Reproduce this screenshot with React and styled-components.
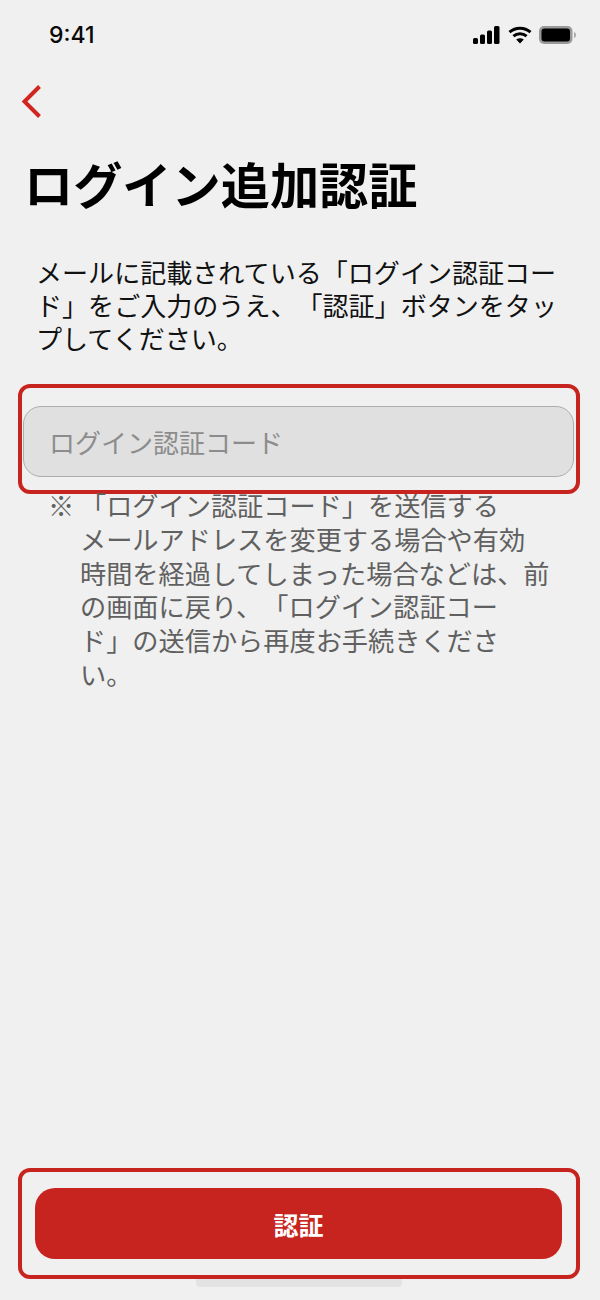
import React from "react";
import styled, { createGlobalStyle } from "styled-components";

const Global = createGlobalStyle`
  html, body { margin: 0; padding: 0; background: #f0f0f0; }
  * { box-sizing: border-box; }
`;

const JP = `"Noto Sans CJK JP", "Noto Sans", sans-serif`;
const RED = "#c8241f";

const Page = styled.div`
  position: relative;
  width: 600px;
  height: 1300px;
  display: flex;
  flex-direction: column;
  background: #f0f0f0;
  font-family: ${JP};
  text-spacing-trim: space-all;
  overflow: hidden;
`;

const StatusBar = styled.div`
  height: 36px;
  margin-top: 17px;
  padding: 0 24px 0 49px;
  display: flex;
  align-items: center;
  justify-content: space-between;
`;

const Time = styled.span`
  font-family: Inter, "Liberation Sans", sans-serif;
  font-weight: 500;
  font-size: 23px;
  color: #0a0a0a;
`;

const StatusIcons = styled.div`
  display: flex;
  align-items: center;
  gap: 7.5px;
`;

const BackButton = styled.button`
  align-self: flex-start;
  margin: 30px 0 0 19px;
  padding: 0;
  border: 0;
  background: none;
  display: flex;
  width: 28px;
  height: 36px;
`;

const Title = styled.h1`
  margin: 29px 0 0 24px;
  font-size: 49.2px;
  line-height: 70px;
  font-weight: 700;
  color: #000;
  white-space: nowrap;
`;

const Lead = styled.p`
  margin: 38px 0 0 36px;
  font-size: 26.05px;
  line-height: 33px;
  font-weight: 400;
  color: #111;
  white-space: nowrap;
`;

const Highlight = styled.div`
  margin: ${(p) => p.$margin};
  height: ${(p) => p.$height}px;
  width: 562px;
  border: 4px solid ${RED};
  border-radius: 12px;
  display: flex;
  align-items: center;
  justify-content: center;
`;

const InputField = styled.input`
  width: 551px;
  height: 71px;
  margin-top: 4px;
  padding: 0 25px;
  border: 1.5px solid #adadad;
  border-radius: 18px;
  background: #e0e0e0;
  font-family: ${JP};
  font-size: 26px;
  outline: none;
  &::placeholder { color: #8c8c8c; opacity: 1; }
`;

const Note = styled.p`
  margin: -5px 0 0 0;
  padding-left: 80px;
  position: relative;
  font-size: 26.2px;
  line-height: 33.8px;
  color: #606060;
  white-space: nowrap;
`;

const NoteMark = styled.span`
  position: absolute;
  left: 48px;
  top: 0;
`;

const Spacer = styled.div`
  flex: 1;
`;

const SubmitButton = styled.button`
  width: 527px;
  height: 71px;
  border: 0;
  border-radius: 20px;
  background: ${RED};
  color: #fff;
  font-family: ${JP};
  font-size: 25px;
  font-weight: 700;
`;

const HomeIndicator = styled.div`
  position: absolute;
  left: 196px;
  top: 1279px;
  width: 206px;
  height: 8px;
  border-radius: 0 0 4px 4px;
  background: #e3e3e3;
`;

const Signal = () => (
  <svg width="27" height="18" viewBox="0 0 27 18" fill="#000">
    <rect x="0" y="12" width="5" height="6" rx="1.5" />
    <rect x="7" y="8.5" width="5" height="9.5" rx="1.5" />
    <rect x="14" y="4.5" width="5" height="13.5" rx="1.5" />
    <rect x="21" y="0" width="5.5" height="18" rx="1.5" />
  </svg>
);

const Wifi = () => (
  <svg width="24" height="18" viewBox="0 0 24 18" fill="none" stroke="#000" strokeWidth="3">
    <path d="M1.5 6.2C7.6 .8 16.4 .8 22.5 6.2" />
    <path d="M5.4 10.2c3.9-3.3 9.3-3.3 13.2 0" />
    <path d="M12 17.6l-3.8-4.1c2.3-1.7 5.3-1.7 7.6 0z" fill="#000" stroke="none" />
  </svg>
);

const Battery = () => (
  <svg width="37" height="18" viewBox="0 0 37 18">
    <rect x="0" y="0" width="33.5" height="18" rx="5" fill="#9a9a9a" />
    <rect x="2.5" y="2.5" width="28.5" height="13" rx="3" fill="#000" />
    <path d="M35 6c1.2.4 2 1.6 2 3s-.8 2.6-2 3z" fill="#a8a8a8" />
  </svg>
);

const Chevron = () => (
  <svg width="28" height="36" viewBox="0 0 28 36" fill="none" stroke="#d0261f" strokeWidth="4">
    <path d="M20.5 3.5L5.5 18.5l15 15" />
  </svg>
);

export default function App() {
  return (
    <Page>
      <Global />
      <StatusBar>
        <Time>9:41</Time>
        <StatusIcons>
          <Signal />
          <Wifi />
          <Battery />
        </StatusIcons>
      </StatusBar>
      <BackButton aria-label="戻る">
        <Chevron />
      </BackButton>
      <Title>ログイン追加認証</Title>
      <Lead>
        メールに記載されている「ログイン認証コー
        <br />
        ド」をご入力のうえ、「認証」ボタンをタッ
        <br />
        プしてください。
      </Lead>
      <Highlight $height={110} $margin="29px 0 0 17.5px">
        <InputField placeholder="ログイン認証コード" />
      </Highlight>
      <Note>
        <NoteMark>※</NoteMark>
        「ログイン認証コード」を送信する
        <br />
        メールアドレスを変更する場合や有効
        <br />
        時間を経過してしまった場合などは、前
        <br />
        の画面に戻り、「ログイン認証コー
        <br />
        ド」の送信から再度お手続きくださ
        <br />
        い。
      </Note>
      <Spacer />
      <Highlight $height={111} $margin="0 0 21px 17.5px">
        <SubmitButton>認証</SubmitButton>
      </Highlight>
      <HomeIndicator />
    </Page>
  );
}
